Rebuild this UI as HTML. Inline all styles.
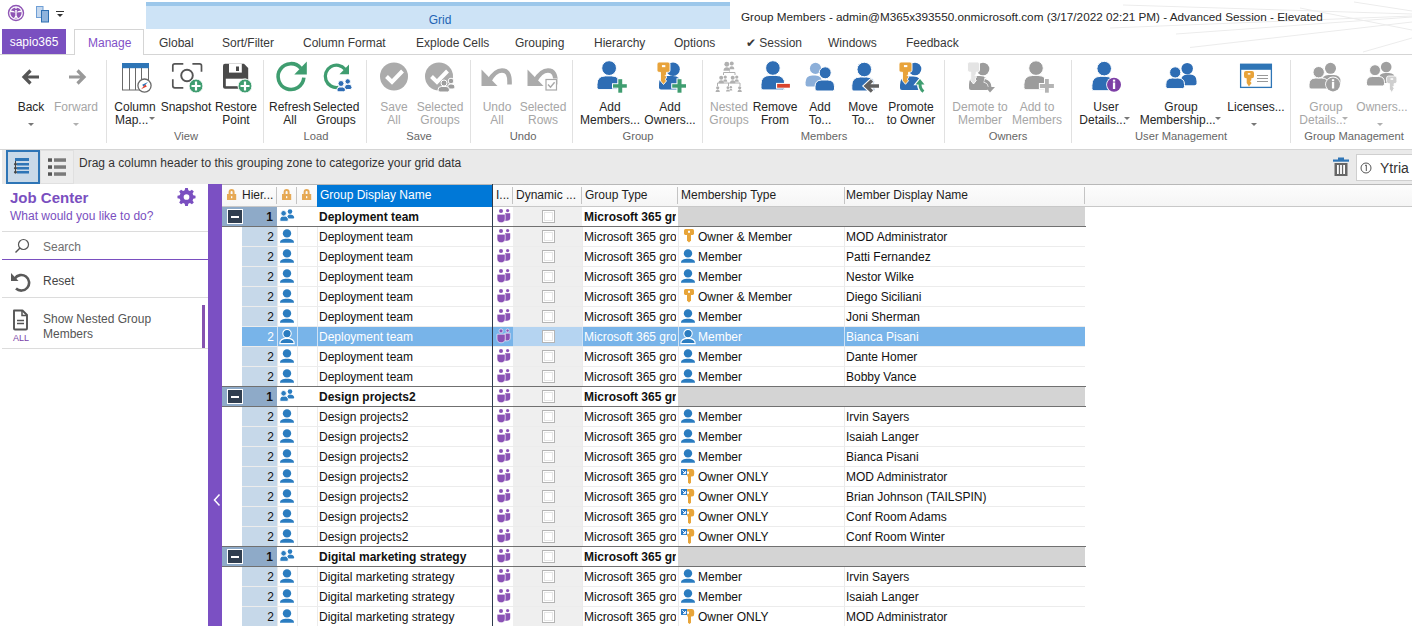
<!DOCTYPE html>
<html><head><meta charset="utf-8"><style>
*{margin:0;padding:0;box-sizing:border-box}
html,body{width:1412px;height:626px;overflow:hidden;background:#fff;font-family:"Liberation Sans", sans-serif;font-size:12px;color:#1e1e1e;position:relative}
.a{position:absolute}
.ic{position:absolute;display:block}
.t{position:absolute;height:20px;line-height:20px;white-space:nowrap;font-size:12px;color:#111}
.t.b{font-weight:bold}
.t.w{color:#fff}
.num{text-align:right}
.clip{overflow:hidden}
.cell{position:absolute}
.rl{position:absolute;left:242px;width:843px;height:1px;background:#ececec}
.gr{position:absolute;left:222px;width:864px;height:1px;background:#707070}
.minus{position:absolute;width:16px;height:15px;background:#303e50;border:1px solid #fff;outline:0}
.minus:after{content:"";position:absolute;left:3px;top:5.5px;width:8px;height:2px;background:#fff}
.cb{position:absolute;width:13px;height:13px;border:1px solid #b4b4b4;background:#fff;box-shadow:inset 0 0 0 1px #fff,inset 0 0 0 2px #e6e6e6}
.tab{position:absolute;top:30px;height:26px;line-height:26px;font-size:12px;color:#383838;white-space:nowrap}
.lbl{position:absolute;text-align:center;font-size:12px;line-height:13px;color:#262626;white-space:nowrap}
.dis{color:#a6a6a6}
.glbl{position:absolute;top:129px;font-size:11.2px;line-height:14px;color:#666;white-space:nowrap;text-align:center}
.sep{position:absolute;top:60px;width:1px;height:83px;background:#e1e1e1}
.dd{position:absolute;width:0;height:0;border-left:3px solid transparent;border-right:3px solid transparent;border-top:3px solid #777}
.hd{position:absolute;top:184px;height:22px;line-height:22px;font-size:12px;color:#1e1e1e;white-space:nowrap}
.hs{position:absolute;top:187px;width:1px;height:17px;background:#c4c4c4}
</style></head><body>
<!-- title bar -->
<svg class="ic" style="left:7px;top:4px" width="18" height="18" viewBox="0 0 18 18"><circle cx="9" cy="9" r="7.5" fill="none" stroke="#8f55b5" stroke-width="1.4"/><circle cx="9" cy="9" r="5.6" fill="#8f55b5"/><path d="M9 5.2 L7.6 3.2 H10.4 Z M8.2 6 H9.8 L9.6 11.5 L11.8 15.5 L9 13.6 L6.2 15.5 L8.4 11.5 Z M3.2 6.2 L7.2 7.2 L8 8.5 L3.2 8 Z M14.8 6.2 L10.8 7.2 L10 8.5 L14.8 8 Z" fill="#fff"/></svg>
<svg class="ic" style="left:35px;top:5px" width="15" height="18" viewBox="0 0 15 18"><rect x="1.5" y="1.5" width="6.5" height="11" fill="#c5d8ee" stroke="#6f9fd6" stroke-width="1"/><rect x="6.5" y="5.5" width="7" height="11.5" fill="#8fb3dc" stroke="#2f6fb2" stroke-width="1"/></svg>
<div class="a" style="left:56px;top:11px;width:8px;height:1.2px;background:#333"></div>
<div class="dd" style="left:57px;top:14px;border-left-width:3.5px;border-right-width:3.5px;border-top:3.5px solid #333"></div>
<div class="a" style="left:146px;top:2px;width:584px;height:27px;background:#cde3f6"></div>
<div class="a" style="left:146px;top:2px;width:584px;height:4px;background:#9cc7ea"></div>
<div class="a" style="left:148px;top:7px;width:584px;height:23px;line-height:26px;text-align:center;color:#1e63b4;font-size:12px">Grid</div>
<svg class="ic" style="left:1100px;top:0" width="312" height="54" viewBox="0 0 312 54"><g stroke="#ececec" stroke-width="1" fill="none"><path d="M23 5 L312 14"/><path d="M10 28 L312 16"/><path d="M76 34 L312 17"/><path d="M90 47.5 L312 22"/><path d="M254 2 L312 11"/><path d="M263 52 L312 38"/><path d="M200 8 L312 30"/></g></svg>
<div class="a" style="left:741px;top:10px;line-height:14px;font-size:11.72px;color:#262626;white-space:nowrap">Group Members - admin@M365x393550.onmicrosoft.com (3/17/2022 02:21 PM) - Advanced Session - Elevated</div>
<!-- tabs -->
<div class="a" style="left:0;top:54px;width:1412px;height:1px;background:#d5d5d5"></div>
<div class="a" style="left:2px;top:29px;width:64px;height:25px;background:#7a50c0;color:#fff;line-height:26px;text-align:center;font-size:12px">sapio365</div>
<div class="a" style="left:74px;top:29px;width:70px;height:26px;background:#fff;border:1px solid #d5d5d5;border-bottom:none"></div>
<div class="tab" style="left:88px;color:#8250c8">Manage</div>
<div class="tab" style="left:159px">Global</div>
<div class="tab" style="left:222px">Sort/Filter</div>
<div class="tab" style="left:303px">Column Format</div>
<div class="tab" style="left:416px">Explode Cells</div>
<div class="tab" style="left:515px">Grouping</div>
<div class="tab" style="left:594px">Hierarchy</div>
<div class="tab" style="left:674px">Options</div>
<div class="tab" style="left:746px">&#10004; Session</div>
<div class="tab" style="left:828px">Windows</div>
<div class="tab" style="left:906px">Feedback</div>
<!-- ribbon -->
<div class="a" style="left:0;top:149px;width:1412px;height:1px;background:#d5d5d5"></div>
<svg class="ic" style="left:0;top:0" width="1412" height="150" viewBox="0 0 1412 150"><path d="M39 77 H24.5 M30.5 70.5 L24 77 L30.5 83.5" fill="none" stroke="#555" stroke-width="3.2" stroke-linejoin="miter"/><path d="M69 77 H83.5 M77.5 70.5 L84 77 L77.5 83.5" fill="none" stroke="#999" stroke-width="3.2"/><rect x="122.5" y="63.5" width="26" height="26.5" fill="#fff" stroke="#6a6a6a"/><rect x="122" y="63" width="27" height="5.2" fill="#2e75b6"/><path d="M129.5 68 V90 M135.5 68 V90 M141.5 68 V82" stroke="#6a6a6a" stroke-width="1"/><circle cx="144.5" cy="85.6" r="6.6" fill="#fff" stroke="#6a6a6a" stroke-width="1.3"/><path d="M148 82 L143.6 86.8 L142.2 84.8 Z" fill="#2e75b6"/><path d="M141 89.2 L145.4 84.4 L146.8 86.4 Z" fill="#e04030"/><path d="M172.8 71.8 V65.8 Q172.8 63.8 174.8 63.8 H183.3 M192.4 63.8 H199.5 Q201.5 63.8 201.5 65.8 V71.8 M172.8 79.3 V85.8 Q172.8 87.8 174.8 87.8 H183.3" fill="none" stroke="#555" stroke-width="1.7"/><circle cx="187" cy="75.5" r="5.8" fill="none" stroke="#555" stroke-width="1.9"/><circle cx="196" cy="86" r="7" fill="#3f9d70" stroke="#fff" stroke-width="1"/><path d="M196 81.5 V90.5 M191.5 86 H200.5" stroke="#fff" stroke-width="2.2"/><path d="M223 65.8 Q223 63.8 225 63.8 H244 L248.2 68 V86.8 Q248.2 88.8 246.2 88.8 H225 Q223 88.8 223 86.8 Z" fill="#4a4a4a"/><rect x="229" y="63.8" width="12.8" height="8.8" fill="#fff"/><rect x="236" y="66.5" width="3" height="4.5" fill="#4a4a4a"/><rect x="225.8" y="78.7" width="20.4" height="7.5" fill="#fff"/><circle cx="245" cy="86" r="7" fill="#3f9d70" stroke="#fff" stroke-width="1"/><path d="M245 81.5 V90.5 M240.5 86 H249.5" stroke="#fff" stroke-width="2.2"/><path d="M303.85 77.7 A12.9 12.9 0 1 1 300.9 68.3" fill="none" stroke="#3f9d70" stroke-width="3.6"/><path d="M294.3 74.6 H306.8 V61.5 Z" fill="#3f9d70"/><path d="M338.4 87.4 A11.2 11.2 0 1 1 345.1 69.2" fill="none" stroke="#3f9d70" stroke-width="3.3"/><path d="M339.5 74.2 H349 V64.5 Z" fill="#3f9d70"/><path d="M344.5 87.5 V87.45 Q344.5 84.2 347.75 84.2 H348.75 Q352 84.2 352 87.45 V87.5 Q352 89.5 350 89.5 H346.5 Q344.5 89.5 344.5 87.5 Z" fill="#2e6db4" stroke="#fff" stroke-width="1"/><circle cx="347.7" cy="81.4" r="2.7" fill="#2e6db4" stroke="#fff" stroke-width="1"/><path d="M336.8 89.8 V89.976 Q336.8 87 339.776 87 H342.524 Q345.5 87 345.5 89.976 V89.8 Q345.5 91.8 343.5 91.8 H338.8 Q336.8 91.8 336.8 89.8 Z" fill="#2e6db4" stroke="#fff" stroke-width="1"/><circle cx="341" cy="83.5" r="3" fill="#2e6db4" stroke="#fff" stroke-width="1"/><circle cx="394" cy="76.5" r="14" fill="#ababab"/><path d="M386.5 76.5 L392 82 L402.5 71" fill="none" stroke="#fff" stroke-width="4"/><circle cx="439" cy="76.5" r="14" fill="#ababab"/><path d="M431.5 76.5 L437 82 L447.5 71" fill="none" stroke="#fff" stroke-width="4"/><path d="M447.5 87 V87.1 Q447.5 84 450.6 84 H451.9 Q455 84 455 87.1 V87 Q455 89 453 89 H449.5 Q447.5 89 447.5 87 Z" fill="#9d9d9d" stroke="#fff" stroke-width="1"/><circle cx="451" cy="81" r="2.8" fill="#9d9d9d" stroke="#fff" stroke-width="1"/><path d="M438 90 V89.91 Q438 86.5 441.41 86.5 H446.09 Q449.5 86.5 449.5 89.91 V90 Q449.5 92 447.5 92 H440 Q438 92 438 90 Z" fill="#9d9d9d" stroke="#fff" stroke-width="1"/><circle cx="444" cy="83" r="3" fill="#9d9d9d" stroke="#fff" stroke-width="1"/><g transform="translate(480,65)"><path d="M1.5 4.5 V21 H17.5 Z" fill="#ababab"/><path d="M9 16 C13 9 16.5 5.5 22 5.5 C27.5 5.5 30 9.5 29.5 19.5" fill="none" stroke="#ababab" stroke-width="4.6"/></g><g transform="translate(526,65)"><path d="M1.5 4.5 V21 H17.5 Z" fill="#ababab"/><path d="M9 16 C13 9 16.5 5.5 22 5.5 C27.5 5.5 30 9.5 29.5 19.5" fill="none" stroke="#ababab" stroke-width="4.6"/></g><rect x="545" y="78.5" width="12.5" height="12.5" fill="#fff"/><rect x="546" y="79.5" width="10.5" height="10.5" fill="#fff" stroke="#a8a8a8" stroke-width="1.2"/><path d="M548 84.5 L550.5 87.2 L554.6 82.3" fill="none" stroke="#a8a8a8" stroke-width="1.4"/><path d="M597 87.6 V84.394 Q597 75.9 605.494 75.9 H611.506 Q620 75.9 620 84.394 V87.6 Q620 89.6 618 89.6 H599 Q597 89.6 597 87.6 Z" fill="#2e6db4" stroke="#fff" stroke-width="1"/><circle cx="609.1" cy="68.1" r="7.4" fill="#2e6db4" stroke="#fff" stroke-width="1"/><path d="M617.3 78.2 H623.2 V83.2 H627.8 V88.7 H623.2 V93.7 H617.3 V88.7 H612 V83.2 H617.3 Z" fill="#fff"/><rect x="613" y="84.2" width="13.799999999999955" height="3.5" fill="#3f9d70"/><rect x="618.3" y="79.2" width="3.900000000000091" height="13.5" fill="#3f9d70"/><path d="M659 87.6 V84.432 Q659 76 667.432 76 H672.568 Q681 76 681 84.432 V87.6 Q681 89.6 679 89.6 H661 Q659 89.6 659 87.6 Z" fill="#2e6db4"/><circle cx="673" cy="69.2" r="6.8" fill="#2e6db4"/><path d="M657 64 Q657 62 659 62 H668 Q670 62 670 64 V70.35 Q670 72.35 668 72.35 H666.49 V74.35 L665.29 75.55 L666.49 76.75 V77.94999999999999 L665.29 79.14999999999999 L666.49 81.0 L663.5 84.5 L660.51 81.0 V72.35 H659 Q657 72.35 657 70.35 Z" fill="#e8a33a" stroke="#fff" stroke-width="0.9"/><rect x="661.94" y="65.105" width="3.38" height="2.07" fill="#fff"/><path d="M676.5 78.2 H682.5 V83.2 H687 V88.7 H682.5 V93.7 H676.5 V88.7 H671.2 V83.2 H676.5 Z" fill="#fff"/><rect x="672.2" y="84.2" width="13.799999999999955" height="3.5" fill="#3f9d70"/><rect x="677.5" y="79.2" width="4.0" height="13.5" fill="#3f9d70"/><g transform="translate(723.5,61.5) scale(1.1)"><circle cx="3" cy="2.5" r="2.2" fill="#b0b0b0"/><path d="M0 8.5 Q0 5.3 3 5.3 Q6 5.3 6 8.5 Z" fill="#b0b0b0"/><circle cx="7.5" cy="1.8" r="1.8" fill="#b0b0b0"/><path d="M5.2 7 Q5.2 4.3 7.5 4.3 Q9.8 4.3 9.8 7 Z" fill="#b0b0b0"/></g><path d="M729.5 71.5 V72.5 M723.5 72.5 H735 M723.5 72.5 V75 M735 72.5 V75" stroke="#b0b0b0" stroke-width="1" fill="none"/><g transform="translate(718.5,75.5) scale(0.9)"><circle cx="3" cy="2.5" r="2.2" fill="#b0b0b0"/><path d="M0 8.5 Q0 5.3 3 5.3 Q6 5.3 6 8.5 Z" fill="#b0b0b0"/><circle cx="7.5" cy="1.8" r="1.8" fill="#b0b0b0"/><path d="M5.2 7 Q5.2 4.3 7.5 4.3 Q9.8 4.3 9.8 7 Z" fill="#b0b0b0"/></g><g transform="translate(730,75.5) scale(0.9)"><circle cx="3" cy="2.5" r="2.2" fill="#b0b0b0"/><path d="M0 8.5 Q0 5.3 3 5.3 Q6 5.3 6 8.5 Z" fill="#b0b0b0"/><circle cx="7.5" cy="1.8" r="1.8" fill="#b0b0b0"/><path d="M5.2 7 Q5.2 4.3 7.5 4.3 Q9.8 4.3 9.8 7 Z" fill="#b0b0b0"/></g><path d="M717.5 83 H740 M717.5 83 V86 M728.5 83 V86 M740 83 V86" stroke="#b0b0b0" stroke-width="1" fill="none"/><circle cx="717.7" cy="87.8" r="1.6" fill="#b0b0b0"/><path d="M715.5 92 Q715.5 89.5 717.7 89.5 Q719.9 89.5 719.9 92 Z" fill="#b0b0b0"/><g transform="translate(726,86) scale(0.65)"><circle cx="3" cy="2.5" r="2.2" fill="#b0b0b0"/><path d="M0 8.5 Q0 5.3 3 5.3 Q6 5.3 6 8.5 Z" fill="#b0b0b0"/><circle cx="7.5" cy="1.8" r="1.8" fill="#b0b0b0"/><path d="M5.2 7 Q5.2 4.3 7.5 4.3 Q9.8 4.3 9.8 7 Z" fill="#b0b0b0"/></g><circle cx="739.7" cy="87.8" r="1.6" fill="#b0b0b0"/><path d="M737.5 92 Q737.5 89.5 739.7 89.5 Q741.9 89.5 741.9 92 Z" fill="#b0b0b0"/><path d="M761 87.9 V84.39 Q761 75.4 769.99 75.4 H775.81 Q784.8 75.4 784.8 84.39 V87.9 Q784.8 89.9 782.8 89.9 H763 Q761 89.9 761 87.9 Z" fill="#2e6db4" stroke="#fff" stroke-width="1"/><circle cx="772.9" cy="68" r="7.3" fill="#2e6db4" stroke="#fff" stroke-width="1"/><rect x="776" y="82.9" width="15" height="5.8" fill="#fff"/><rect x="777.1" y="83.9" width="12.8" height="3.8" fill="#d9442e"/><path d="M805.6 84.5 V82.32 Q805.6 75.5 812.4200000000001 75.5 H815.18 Q822 75.5 822 82.32 V84.5 Q822 86.5 820 86.5 H807.6 Q805.6 86.5 805.6 84.5 Z" fill="#8cafd9"/><circle cx="815.5" cy="68.4" r="5.6" fill="#8cafd9"/><path d="M815 89 V86.82 Q815 80 821.82 80 H827.68 Q834.5 80 834.5 86.82 V89 Q834.5 91 832.5 91 H817 Q815 91 815 89 Z" fill="#2e6db4" stroke="#fff" stroke-width="1"/><circle cx="825.2" cy="72.8" r="6" fill="#2e6db4" stroke="#fff" stroke-width="1"/><path d="M851.8 89 V85.68 Q851.8 77 860.4799999999999 77 H866.32 Q875 77 875 85.68 V89 Q875 91 873 91 H853.8 Q851.8 91 851.8 89 Z" fill="#2e6db4" stroke="#fff" stroke-width="1"/><circle cx="864.3" cy="69.5" r="7.3" fill="#2e6db4" stroke="#fff" stroke-width="1"/><path d="M879.5 86 H867 M872.5 80 L866 86 L872.5 92" fill="none" stroke="#fff" stroke-width="5.5"/><path d="M879 86 H867 M872 80.5 L866 86 L872 91.5" fill="none" stroke="#606060" stroke-width="3.4"/><path d="M900 88 V84.87 Q900 76.5 908.37 76.5 H913.13 Q921.5 76.5 921.5 84.87 V88 Q921.5 90 919.5 90 H902 Q900 90 900 88 Z" fill="#2e6db4"/><circle cx="915" cy="69" r="6.3" fill="#2e6db4"/><path d="M899 64 Q899 62 901 62 H910 Q912 62 912 64 V70.258 Q912 72.258 910 72.258 H908.49 V74.258 L907.29 75.458 L908.49 76.658 V77.85799999999999 L907.29 79.05799999999999 L908.49 80.8 L905.5 84.3 L902.51 80.8 V72.258 H901 Q899 72.258 899 70.258 Z" fill="#e8a33a" stroke="#fff" stroke-width="0.9"/><rect x="903.94" y="65.0774" width="3.38" height="2.0516" fill="#fff"/><path d="M923.5 91.5 C919.5 89.5 919.5 86 919.5 84 V83" fill="none" stroke="#fff" stroke-width="5"/><path d="M915 84.5 L920 78.5 L925 84.5 Z" fill="#fff" stroke="#fff" stroke-width="1.5"/><path d="M923.5 91.5 C920.5 89.5 920 86.5 920 84 V83" fill="none" stroke="#3f9d70" stroke-width="3"/><path d="M915.5 84.5 L920 79 L924.5 84.5 Z" fill="#3f9d70"/><path d="M969 88 V84.68 Q969 76 977.68 76 H979.82 Q988.5 76 988.5 84.68 V88 Q988.5 90 986.5 90 H971 Q969 90 969 88 Z" fill="#9c9c9c"/><circle cx="983" cy="69" r="6.3" fill="#9c9c9c"/><path d="M967.5 64 Q967.5 62 969.5 62 H977.5 Q979.5 62 979.5 64 V70.12 Q979.5 72.12 977.5 72.12 H976.26 V74.12 L975.06 75.32000000000001 L976.26 76.52000000000001 V77.72 L975.06 78.92 L976.26 80.5 L973.5 84 L970.74 80.5 V72.12 H969.5 Q967.5 72.12 967.5 70.12 Z" fill="#e4e4e4" stroke="#fff" stroke-width="0.9"/><path d="M984 80 C989 81 990.5 84 990.5 88 V89" fill="none" stroke="#fff" stroke-width="5"/><path d="M984.5 80.5 C988.5 81.5 990 84 990 87.5 V88" fill="none" stroke="#9c9c9c" stroke-width="3"/><path d="M985.5 87 L990 92.5 L995 87 Z" fill="#9c9c9c"/><path d="M1023.9 87.7 V84.304 Q1023.9 75.5 1032.704 75.5 H1038.196 Q1047 75.5 1047 84.304 V87.7 Q1047 89.7 1045 89.7 H1025.9 Q1023.9 89.7 1023.9 87.7 Z" fill="#9c9c9c" stroke="#fff" stroke-width="1"/><circle cx="1036" cy="68.1" r="7.3" fill="#9c9c9c" stroke="#fff" stroke-width="1"/><path d="M1044 78 H1049.8 V83 H1054.9 V89 H1049.8 V93.7 H1044 V89 H1038.9 V83 H1044 Z" fill="#fff"/><rect x="1039.9" y="84" width="14.0" height="4" fill="#b4b4b4"/><rect x="1045" y="79" width="3.7999999999999545" height="13.700000000000003" fill="#b4b4b4"/><path d="M1091.9 88.7 V85.228 Q1091.9 76.3 1100.8280000000002 76.3 H1105.072 Q1114 76.3 1114 85.228 V88.7 Q1114 90.7 1112 90.7 H1093.9 Q1091.9 90.7 1091.9 88.7 Z" fill="#2e6db4" stroke="#fff" stroke-width="1"/><circle cx="1104.2" cy="68.6" r="7.3" fill="#2e6db4" stroke="#fff" stroke-width="1"/><circle cx="1114" cy="84.8" r="7.8" fill="#fff"/><circle cx="1114" cy="84.8" r="7" fill="#7d3fa6"/><rect x="1112.9" y="82.5" width="2.3" height="6.5" fill="#fff"/><rect x="1112.9" y="79.6" width="2.3" height="2" fill="#fff"/><path d="M1181 83.2 V81.172 Q1181 74.6 1187.5720000000001 74.6 H1189.9279999999999 Q1196.5 74.6 1196.5 81.172 V83.2 Q1196.5 85.2 1194.5 85.2 H1183 Q1181 85.2 1181 83.2 Z" fill="#2e6db4"/><circle cx="1187.2" cy="68.6" r="5.7" fill="#2e6db4"/><path d="M1165.8 86.6 V84.572 Q1165.8 78 1172.3719999999998 78 H1177.928 Q1184.5 78 1184.5 84.572 V86.6 Q1184.5 88.6 1182.5 88.6 H1167.8 Q1165.8 88.6 1165.8 86.6 Z" fill="#2e6db4" stroke="#fff" stroke-width="1"/><circle cx="1175.2" cy="72.4" r="5.6" fill="#2e6db4" stroke="#fff" stroke-width="1"/><rect x="1240.6" y="64.4" width="30.8" height="23" fill="#fff" stroke="#2e75b6" stroke-width="1.3"/><rect x="1240" y="63.8" width="32" height="6" fill="#2e75b6"/><path d="M1244 73 Q1244 71 1246 71 H1252 Q1254 71 1254 73 V76.13 Q1254 78.13 1252 78.13 H1251.3 V80.13 L1250.1 81.33 L1251.3 82.53 V83.72999999999999 L1250.1 84.92999999999999 L1251.3 83.0 L1249.0 86.5 L1246.7 83.0 V78.13 H1246 Q1244 78.13 1244 76.13 Z" fill="#e8a33a"/><rect x="1247.8" y="73.139" width="2.6" height="1.4260000000000002" fill="#fff"/><path d="M1257 75.5 H1268 M1257 78.5 H1268 M1257 81.5 H1268" stroke="#999" stroke-width="1"/><path d="M1322 83.5 V81.51 Q1322 75 1328.51 75 H1333.99 Q1340.5 75 1340.5 81.51 V83.5 Q1340.5 85.5 1338.5 85.5 H1324 Q1322 85.5 1322 83.5 Z" fill="#a0a0a0"/><circle cx="1330.5" cy="68.3" r="5.5" fill="#a0a0a0"/><path d="M1309 87 V84.82 Q1309 78 1315.82 78 H1321.68 Q1328.5 78 1328.5 84.82 V87 Q1328.5 89 1326.5 89 H1311 Q1309 89 1309 87 Z" fill="#a0a0a0" stroke="#fff" stroke-width="1"/><circle cx="1318.7" cy="72.2" r="5.7" fill="#a0a0a0" stroke="#fff" stroke-width="1"/><circle cx="1333" cy="84.4" r="7.8" fill="#fff"/><circle cx="1333" cy="84.4" r="7" fill="#a0a0a0"/><rect x="1331.9" y="82" width="2.3" height="6.5" fill="#fff"/><rect x="1331.9" y="79.2" width="2.3" height="2" fill="#fff"/><path d="M1379 81 V79.2 Q1379 73 1385.2 73 H1388.8 Q1395 73 1395 79.2 V81 Q1395 83 1393 83 H1381 Q1379 83 1379 81 Z" fill="#a0a0a0"/><circle cx="1386.2" cy="67" r="5.3" fill="#a0a0a0"/><path d="M1366.5 84 V82.39 Q1366.5 76.5 1372.39 76.5 H1378.61 Q1384.5 76.5 1384.5 82.39 V84 Q1384.5 86 1382.5 86 H1368.5 Q1366.5 86 1366.5 84 Z" fill="#a0a0a0" stroke="#fff" stroke-width="1"/><circle cx="1375" cy="70.2" r="5.5" fill="#a0a0a0" stroke="#fff" stroke-width="1"/><path d="M1386.6 78 Q1386.6 76 1388.6 76 H1394.8999999999999 Q1396.8999999999999 76 1396.8999999999999 78 V81.59 Q1396.8999999999999 83.59 1394.8999999999999 83.59 H1394.119 V85.59 L1392.9189999999999 86.79 L1394.119 87.99000000000001 V89.19 L1392.9189999999999 90.39 L1394.119 89.0 L1391.75 92.5 L1389.3809999999999 89.0 V83.59 H1388.6 Q1386.6 83.59 1386.6 81.59 Z" fill="#cfcfcf" stroke="#fff" stroke-width="0.9"/><rect x="1390.514" y="78.277" width="2.6780000000000004" height="1.5180000000000002" fill="#fff"/></svg>
<div class="lbl" style="left:-29px;top:101px;width:120px">Back</div>
<div class="dd" style="left:28px;top:123px;border-top-color:#777"></div>
<div class="lbl dis" style="left:16px;top:101px;width:120px">Forward</div>
<div class="dd" style="left:73px;top:123px;border-top-color:#b0b0b0"></div>
<div class="sep" style="left:106px"></div>
<div class="lbl" style="left:75px;top:101px;width:120px">Column<br>Map...&nbsp;&nbsp;</div>
<div class="dd" style="left:149px;top:117px;border-top-color:#777"></div>
<div class="lbl" style="left:126px;top:101px;width:120px">Snapshot</div>
<div class="lbl" style="left:176px;top:101px;width:120px">Restore<br>Point</div>
<div class="glbl" style="left:106px;width:160px">View</div>
<div class="sep" style="left:263px"></div>
<div class="lbl" style="left:230px;top:101px;width:120px">Refresh<br>All</div>
<div class="lbl" style="left:276px;top:101px;width:120px">Selected<br>Groups</div>
<div class="glbl" style="left:236px;width:160px">Load</div>
<div class="sep" style="left:366px"></div>
<div class="lbl dis" style="left:334px;top:101px;width:120px">Save<br>All</div>
<div class="lbl dis" style="left:380px;top:101px;width:120px">Selected<br>Groups</div>
<div class="glbl" style="left:339px;width:160px">Save</div>
<div class="sep" style="left:470px"></div>
<div class="lbl dis" style="left:437px;top:101px;width:120px">Undo<br>All</div>
<div class="lbl dis" style="left:483px;top:101px;width:120px">Selected<br>Rows</div>
<div class="glbl" style="left:443px;width:160px">Undo</div>
<div class="sep" style="left:572px"></div>
<div class="lbl" style="left:550px;top:101px;width:120px">Add<br>Members...</div>
<div class="lbl" style="left:610px;top:101px;width:120px">Add<br>Owners...</div>
<div class="glbl" style="left:558px;width:160px">Group</div>
<div class="sep" style="left:702px"></div>
<div class="lbl dis" style="left:669px;top:101px;width:120px">Nested<br>Groups</div>
<div class="lbl" style="left:715px;top:101px;width:120px">Remove<br>From</div>
<div class="lbl" style="left:760px;top:101px;width:120px">Add<br>To...</div>
<div class="lbl" style="left:803px;top:101px;width:120px">Move<br>To...</div>
<div class="lbl" style="left:851px;top:101px;width:120px">Promote<br>to Owner</div>
<div class="glbl" style="left:744px;width:160px">Members</div>
<div class="sep" style="left:944px"></div>
<div class="lbl dis" style="left:920px;top:101px;width:120px">Demote to<br>Member</div>
<div class="lbl dis" style="left:977px;top:101px;width:120px">Add to<br>Members</div>
<div class="glbl" style="left:928px;width:160px">Owners</div>
<div class="sep" style="left:1071px"></div>
<div class="lbl" style="left:1046px;top:101px;width:120px">User<br>Details...&nbsp;&nbsp;</div>
<div class="dd" style="left:1124px;top:117px;border-top-color:#777"></div>
<div class="lbl" style="left:1121px;top:101px;width:120px">Group<br>Membership...&nbsp;&nbsp;</div>
<div class="dd" style="left:1215px;top:117px;border-top-color:#777"></div>
<div class="lbl" style="left:1196px;top:101px;width:120px">Licenses...</div>
<div class="dd" style="left:1251px;top:123px;border-top-color:#777"></div>
<div class="glbl" style="left:1101px;width:160px">User Management</div>
<div class="sep" style="left:1290px"></div>
<div class="lbl dis" style="left:1266px;top:101px;width:120px">Group<br>Details...&nbsp;&nbsp;</div>
<div class="dd" style="left:1342px;top:117px;border-top-color:#b0b0b0"></div>
<div class="lbl dis" style="left:1322px;top:101px;width:120px">Owners...</div>
<div class="dd" style="left:1377px;top:123px;border-top-color:#b0b0b0"></div>
<div class="glbl" style="left:1274px;width:160px">Group Management</div>
<!-- grouping zone -->
<div class="a" style="left:2px;top:150px;width:1410px;height:34px;background:#eaeaea"></div>
<div class="a" style="left:6px;top:150px;width:34px;height:34px;background:#c9d9e8;border:2px solid #2e75b6"></div>
<svg class="ic" style="left:13px;top:157px" width="18" height="18" viewBox="0 0 18 18"><rect x="2" y="1" width="14" height="3" fill="#2e75b6"/><rect x="4" y="6" width="12" height="2.5" fill="#2e75b6"/><rect x="4" y="10" width="12" height="2.5" fill="#2e75b6"/><rect x="4" y="14" width="12" height="2.5" fill="#2e75b6"/><path d="M2.5 4 V16" stroke="#444" stroke-width="1"/><circle cx="2.5" cy="7.2" r="1.1" fill="none" stroke="#444"/><circle cx="2.5" cy="11.2" r="1.1" fill="none" stroke="#444"/><circle cx="2.5" cy="15.2" r="1.1" fill="none" stroke="#444"/></svg>
<div class="a" style="left:40px;top:150px;width:34px;height:34px;background:#ededed;border:1px solid #e0e0e0"></div>
<svg class="ic" style="left:47px;top:157px" width="20" height="20" viewBox="0 0 20 20"><rect x="1" y="1.3" width="4" height="3.5" fill="#555"/><rect x="7" y="1.3" width="12" height="3.5" fill="#7a7a7a"/><rect x="1" y="8.3" width="4" height="3.5" fill="#555"/><rect x="7" y="8.3" width="12" height="3.5" fill="#7a7a7a"/><rect x="1" y="15.3" width="4" height="3.5" fill="#555"/><rect x="7" y="15.3" width="12" height="3.5" fill="#7a7a7a"/></svg>
<div class="a" style="left:79px;top:156px;line-height:15px;color:#333;white-space:nowrap">Drag a column header to this grouping zone to categorize your grid data</div>
<svg class="ic" style="left:1332px;top:157px" width="18" height="20" viewBox="0 0 18 20"><rect x="1" y="2.5" width="16" height="2.2" fill="#2e75b6"/><rect x="6" y="0.5" width="6" height="2.5" fill="#2e75b6"/><path d="M2.5 6 H15.5 V19 H2.5 Z" fill="#666"/><rect x="5" y="8" width="1.8" height="9" fill="#fff"/><rect x="8.1" y="8" width="1.8" height="9" fill="#fff"/><rect x="11.2" y="8" width="1.8" height="9" fill="#fff"/></svg>
<div class="a" style="left:1356px;top:154px;width:60px;height:27px;background:#fff;border:1px solid #cfcfcf"></div>
<svg class="ic" style="left:1360px;top:162px" width="12" height="12" viewBox="0 0 12 12"><circle cx="6" cy="6" r="5" fill="none" stroke="#555" stroke-width="1"/><path d="M5 3.5 L6.3 3 V9" stroke="#555" stroke-width="1" fill="none"/></svg>
<div class="a" style="left:1380px;top:159px;line-height:18px;font-size:14px;color:#333">Ytria</div>
<!-- left panel -->
<div class="a" style="left:10px;top:189px;font-size:15px;line-height:17px;font-weight:bold;color:#7a4fc0;white-space:nowrap">Job Center</div>
<div class="a" style="left:10px;top:209px;font-size:12px;line-height:15px;color:#7a4fc0;white-space:nowrap">What would you like to do?</div>
<svg class="ic" style="left:177px;top:187px" width="19" height="19" viewBox="0 0 20 20"><path fill="#7a4fc0" d="M8.6 1 H11.4 L11.9 3.4 L13.6 4.1 L15.7 2.8 L17.7 4.8 L16.4 6.9 L17.1 8.6 L19.5 9.1 V11.9 L17.1 12.4 L16.4 14.1 L17.7 16.2 L15.7 18.2 L13.6 16.9 L11.9 17.6 L11.4 20 H8.6 L8.1 17.6 L6.4 16.9 L4.3 18.2 L2.3 16.2 L3.6 14.1 L2.9 12.4 L0.5 11.9 V9.1 L2.9 8.6 L3.6 6.9 L2.3 4.8 L4.3 2.8 L6.4 4.1 L8.1 3.4 Z"/><circle cx="10" cy="10.5" r="3" fill="#fff"/></svg>
<div class="a" style="left:2px;top:231px;width:206px;height:1px;background:#dcdcdc"></div>
<svg class="ic" style="left:14px;top:238px" width="16" height="16" viewBox="0 0 16 16"><circle cx="9.5" cy="6.5" r="5" fill="none" stroke="#555" stroke-width="1.2"/><path d="M6 10 L1.5 14.5" stroke="#555" stroke-width="1.4"/></svg>
<div class="a" style="left:43px;top:240px;line-height:15px;color:#707070">Search</div>
<div class="a" style="left:2px;top:259px;width:206px;height:1px;background:#7a4fc0"></div>
<svg class="ic" style="left:10px;top:271px" width="21" height="21" viewBox="0 0 21 21"><path d="M4.8 7.5 A7.8 7.8 0 1 1 6 17.5" fill="none" stroke="#5a5a5a" stroke-width="2.6"/><path d="M1 2 V10 H8.5 Z" fill="#5a5a5a"/></svg>
<div class="a" style="left:43px;top:274px;line-height:15px;color:#444">Reset</div>
<div class="a" style="left:2px;top:297px;width:206px;height:1px;background:#dcdcdc"></div>
<svg class="ic" style="left:12px;top:309px" width="17" height="22" viewBox="0 0 17 22"><path d="M2 1.5 H10.5 L15 6 V19.5 Q15 20.5 14 20.5 H3 Q2 20.5 2 19.5 Z" fill="none" stroke="#555" stroke-width="1.9" stroke-linejoin="round"/><path d="M10 1.5 V6.5 H15" fill="none" stroke="#555" stroke-width="1.5"/><path d="M5 11.5 H12 M5 14.5 H12" stroke="#555" stroke-width="1.6"/></svg>
<div class="a" style="left:13px;top:333px;font-size:9px;line-height:10px;color:#7a3fa8">ALL</div>
<div class="a" style="left:43px;top:312px;line-height:15px;color:#555;white-space:nowrap">Show Nested Group<br>Members</div>
<div class="a" style="left:202px;top:305px;width:2.5px;height:43px;background:#8552b0"></div>
<div class="a" style="left:2px;top:348px;width:206px;height:1px;background:#dcdcdc"></div>
<!-- purple strip -->
<div class="a" style="left:208px;top:184px;width:14px;height:442px;background:#7b50c3"></div>
<svg class="ic" style="left:213px;top:493px" width="8" height="14" viewBox="0 0 8 14"><path d="M6.5 1.5 L1.5 7 L6.5 12.5" fill="none" stroke="#fff" stroke-width="1.5"/></svg>
<!-- grid header -->
<div class="a" style="left:222px;top:184px;width:1190px;height:23px;background:linear-gradient(#fdfdfd,#f5f5f5);border-bottom:1px solid #c8c8c8"></div>
<div class="a" style="left:222px;top:184px;width:1190px;height:1px;background:#b8b8b8"></div>
<div class="a" style="left:317px;top:185px;width:176px;height:22px;background:#0078d7"></div>
<svg class="ic" style="left:227px;top:189px" width="10" height="11" viewBox="0 0 10 11"><path d="M1.6 5.5 V3 Q1.6 0 4.6 0 Q7.6 0 7.6 3 V5.5 H5.6 V3 Q5.6 2 4.6 2 Q3.6 2 3.6 3 V5.5 Z" fill="#e6a955"/><rect x="0" y="5" width="9.2" height="6" fill="#e6a955"/><rect x="4" y="7.2" width="1.3" height="2" fill="#fff"/></svg>
<div class="hd" style="left:242px">Hier...</div>
<div class="hs" style="left:276px"></div>
<svg class="ic" style="left:282px;top:189px" width="10" height="11" viewBox="0 0 10 11"><path d="M1.6 5.5 V3 Q1.6 0 4.6 0 Q7.6 0 7.6 3 V5.5 H5.6 V3 Q5.6 2 4.6 2 Q3.6 2 3.6 3 V5.5 Z" fill="#e6a955"/><rect x="0" y="5" width="9.2" height="6" fill="#e6a955"/><rect x="4" y="7.2" width="1.3" height="2" fill="#fff"/></svg>
<div class="hs" style="left:296px"></div>
<svg class="ic" style="left:302px;top:189px" width="10" height="11" viewBox="0 0 10 11"><path d="M1.6 5.5 V3 Q1.6 0 4.6 0 Q7.6 0 7.6 3 V5.5 H5.6 V3 Q5.6 2 4.6 2 Q3.6 2 3.6 3 V5.5 Z" fill="#e6a955"/><rect x="0" y="5" width="9.2" height="6" fill="#e6a955"/><rect x="4" y="7.2" width="1.3" height="2" fill="#fff"/></svg>
<div class="hd" style="left:320px;color:#fff">Group Display Name</div>
<div class="hd" style="left:496px">I...</div>
<div class="hs" style="left:512px"></div>
<div class="hd" style="left:516px">Dynamic ...</div>
<div class="hs" style="left:581px"></div>
<div class="hd" style="left:585px">Group Type</div>
<div class="hs" style="left:677px"></div>
<div class="hd" style="left:681px">Membership Type</div>
<div class="hs" style="left:844px"></div>
<div class="hd" style="left:846px">Member Display Name</div>
<div class="hs" style="left:1084px"></div>
<!-- grid body -->
<div class="cell" style="left:222px;top:207px;width:55px;height:20px;background:#8eaac8"></div>
<div class="minus" style="left:227px;top:209px"></div>
<div class="t num b" style="left:240px;top:207px;width:33px">1</div>
<svg class="ic" style="left:279px;top:209px" width="16" height="14" viewBox="0 -1 16 14"><circle cx="11" cy="1.6" r="2.3" fill="#2a7cc0"/><path d="M8 8.6 C8 5.8 9.3 4.4 11 4.4 C13 4.4 15.2 5.6 15.2 7.6 Q15.2 8.6 14.2 8.6 Z" fill="#2a7cc0"/><path d="M0.8 10.2 C0.8 7.2 2.4 5.9 4.8 5.9 C7.4 5.9 9.4 7.2 9.4 10 Q9.4 11.3 8 11.3 H2 Q0.8 11.3 0.8 10.2 Z" fill="#2a7cc0" stroke="#fff" stroke-width="0.9"/><circle cx="4.6" cy="3.3" r="2.8" fill="#2a7cc0" stroke="#fff" stroke-width="0.9"/></svg>
<div class="t b" style="left:319px;top:207px">Deployment team</div>
<div class="cell" style="left:513px;top:207px;width:69px;height:20px;background:#efefef"></div>
<svg class="ic" style="left:496px;top:207px" width="16" height="17" viewBox="0 0 16 17"><circle cx="11.6" cy="3.6" r="1.6" fill="#8a52b5"/><path d="M9 6.2 H14.2 V11 C14.2 12.7 13 13.8 11.2 13.8 H9 Z" fill="#8a52b5"/><circle cx="5" cy="3.9" r="2" fill="#8a52b5"/><path d="M1 7.2 H9.2 V12 C9.2 14.4 7.4 15.8 5.1 15.8 C2.8 15.8 1 14.4 1 12 Z" fill="#8a52b5" stroke="#fff" stroke-width="0.7"/></svg>
<div class="cb" style="left:542px;top:210px"></div>
<div class="t b clip" style="left:584px;top:207px;width:92px">Microsoft 365 group</div>
<div class="cell" style="left:678px;top:207px;width:407px;height:20px;background:#d4d4d4"></div>
<div class="gr" style="top:226px"></div>
<div class="cell" style="left:242px;top:227px;width:35px;height:20px;background:#c6d8e9"></div>
<div class="cell" style="left:513px;top:227px;width:69px;height:20px;background:#efefef"></div>
<div class="rl" style="top:246px"></div>
<div class="cell" style="left:277px;top:227px;width:1px;height:19px;background:#ebebeb"></div>
<div class="cell" style="left:297px;top:227px;width:1px;height:19px;background:#ebebeb"></div>
<div class="cell" style="left:317px;top:227px;width:1px;height:19px;background:#ebebeb"></div>
<div class="cell" style="left:582px;top:227px;width:1px;height:19px;background:#ebebeb"></div>
<div class="cell" style="left:678px;top:227px;width:1px;height:19px;background:#ebebeb"></div>
<div class="cell" style="left:844px;top:227px;width:1px;height:19px;background:#ebebeb"></div>
<div class="t num" style="left:240px;top:227px;width:34px">2</div>
<svg class="ic" style="left:279px;top:229px" width="16" height="16" viewBox="0 0 16 16"><circle cx="8" cy="4.4" r="4.2" fill="#2a7cc0"/><path d="M1 13.8 C1 10.8 3.5 9.8 8 9.8 C12.5 9.8 15 10.8 15 13.8 Z" fill="#2a7cc0"/></svg>
<div class="t" style="left:319px;top:227px">Deployment team</div>
<svg class="ic" style="left:496px;top:227px" width="16" height="17" viewBox="0 0 16 17"><circle cx="11.6" cy="3.6" r="1.6" fill="#8a52b5"/><path d="M9 6.2 H14.2 V11 C14.2 12.7 13 13.8 11.2 13.8 H9 Z" fill="#8a52b5"/><circle cx="5" cy="3.9" r="2" fill="#8a52b5"/><path d="M1 7.2 H9.2 V12 C9.2 14.4 7.4 15.8 5.1 15.8 C2.8 15.8 1 14.4 1 12 Z" fill="#8a52b5" stroke="#fff" stroke-width="0.7"/></svg>
<div class="cb" style="left:542px;top:230px"></div>
<div class="t clip" style="left:584px;top:227px;width:92px">Microsoft 365 group</div>
<svg class="ic" style="left:683px;top:228px" width="12" height="16" viewBox="0 0 12 16"><path d="M1 2.5 Q1 1 2.5 1 H9.5 Q11 1 11 2.5 V6 L10 7 H2 L1 6 Z" fill="#e8a53a"/><rect x="5" y="2.8" width="2" height="2" fill="#fff"/><path d="M4 7 H8 V12.5 L6 14.5 L4 12.5 Z" fill="#e8a53a"/></svg>
<div class="t" style="left:698px;top:227px">Owner &amp; Member</div>
<div class="t" style="left:846px;top:227px">MOD Administrator</div>
<div class="cell" style="left:242px;top:247px;width:35px;height:20px;background:#c6d8e9"></div>
<div class="cell" style="left:513px;top:247px;width:69px;height:20px;background:#efefef"></div>
<div class="rl" style="top:266px"></div>
<div class="cell" style="left:277px;top:247px;width:1px;height:19px;background:#ebebeb"></div>
<div class="cell" style="left:297px;top:247px;width:1px;height:19px;background:#ebebeb"></div>
<div class="cell" style="left:317px;top:247px;width:1px;height:19px;background:#ebebeb"></div>
<div class="cell" style="left:582px;top:247px;width:1px;height:19px;background:#ebebeb"></div>
<div class="cell" style="left:678px;top:247px;width:1px;height:19px;background:#ebebeb"></div>
<div class="cell" style="left:844px;top:247px;width:1px;height:19px;background:#ebebeb"></div>
<div class="t num" style="left:240px;top:247px;width:34px">2</div>
<svg class="ic" style="left:279px;top:249px" width="16" height="16" viewBox="0 0 16 16"><circle cx="8" cy="4.4" r="4.2" fill="#2a7cc0"/><path d="M1 13.8 C1 10.8 3.5 9.8 8 9.8 C12.5 9.8 15 10.8 15 13.8 Z" fill="#2a7cc0"/></svg>
<div class="t" style="left:319px;top:247px">Deployment team</div>
<svg class="ic" style="left:496px;top:247px" width="16" height="17" viewBox="0 0 16 17"><circle cx="11.6" cy="3.6" r="1.6" fill="#8a52b5"/><path d="M9 6.2 H14.2 V11 C14.2 12.7 13 13.8 11.2 13.8 H9 Z" fill="#8a52b5"/><circle cx="5" cy="3.9" r="2" fill="#8a52b5"/><path d="M1 7.2 H9.2 V12 C9.2 14.4 7.4 15.8 5.1 15.8 C2.8 15.8 1 14.4 1 12 Z" fill="#8a52b5" stroke="#fff" stroke-width="0.7"/></svg>
<div class="cb" style="left:542px;top:250px"></div>
<div class="t clip" style="left:584px;top:247px;width:92px">Microsoft 365 group</div>
<svg class="ic" style="left:680px;top:249px" width="16" height="16" viewBox="0 0 16 16"><circle cx="8" cy="4.4" r="4.2" fill="#2a7cc0"/><path d="M1 13.8 C1 10.8 3.5 9.8 8 9.8 C12.5 9.8 15 10.8 15 13.8 Z" fill="#2a7cc0"/></svg>
<div class="t" style="left:698px;top:247px">Member</div>
<div class="t" style="left:846px;top:247px">Patti Fernandez</div>
<div class="cell" style="left:242px;top:267px;width:35px;height:20px;background:#c6d8e9"></div>
<div class="cell" style="left:513px;top:267px;width:69px;height:20px;background:#efefef"></div>
<div class="rl" style="top:286px"></div>
<div class="cell" style="left:277px;top:267px;width:1px;height:19px;background:#ebebeb"></div>
<div class="cell" style="left:297px;top:267px;width:1px;height:19px;background:#ebebeb"></div>
<div class="cell" style="left:317px;top:267px;width:1px;height:19px;background:#ebebeb"></div>
<div class="cell" style="left:582px;top:267px;width:1px;height:19px;background:#ebebeb"></div>
<div class="cell" style="left:678px;top:267px;width:1px;height:19px;background:#ebebeb"></div>
<div class="cell" style="left:844px;top:267px;width:1px;height:19px;background:#ebebeb"></div>
<div class="t num" style="left:240px;top:267px;width:34px">2</div>
<svg class="ic" style="left:279px;top:269px" width="16" height="16" viewBox="0 0 16 16"><circle cx="8" cy="4.4" r="4.2" fill="#2a7cc0"/><path d="M1 13.8 C1 10.8 3.5 9.8 8 9.8 C12.5 9.8 15 10.8 15 13.8 Z" fill="#2a7cc0"/></svg>
<div class="t" style="left:319px;top:267px">Deployment team</div>
<svg class="ic" style="left:496px;top:267px" width="16" height="17" viewBox="0 0 16 17"><circle cx="11.6" cy="3.6" r="1.6" fill="#8a52b5"/><path d="M9 6.2 H14.2 V11 C14.2 12.7 13 13.8 11.2 13.8 H9 Z" fill="#8a52b5"/><circle cx="5" cy="3.9" r="2" fill="#8a52b5"/><path d="M1 7.2 H9.2 V12 C9.2 14.4 7.4 15.8 5.1 15.8 C2.8 15.8 1 14.4 1 12 Z" fill="#8a52b5" stroke="#fff" stroke-width="0.7"/></svg>
<div class="cb" style="left:542px;top:270px"></div>
<div class="t clip" style="left:584px;top:267px;width:92px">Microsoft 365 group</div>
<svg class="ic" style="left:680px;top:269px" width="16" height="16" viewBox="0 0 16 16"><circle cx="8" cy="4.4" r="4.2" fill="#2a7cc0"/><path d="M1 13.8 C1 10.8 3.5 9.8 8 9.8 C12.5 9.8 15 10.8 15 13.8 Z" fill="#2a7cc0"/></svg>
<div class="t" style="left:698px;top:267px">Member</div>
<div class="t" style="left:846px;top:267px">Nestor Wilke</div>
<div class="cell" style="left:242px;top:287px;width:35px;height:20px;background:#c6d8e9"></div>
<div class="cell" style="left:513px;top:287px;width:69px;height:20px;background:#efefef"></div>
<div class="rl" style="top:306px"></div>
<div class="cell" style="left:277px;top:287px;width:1px;height:19px;background:#ebebeb"></div>
<div class="cell" style="left:297px;top:287px;width:1px;height:19px;background:#ebebeb"></div>
<div class="cell" style="left:317px;top:287px;width:1px;height:19px;background:#ebebeb"></div>
<div class="cell" style="left:582px;top:287px;width:1px;height:19px;background:#ebebeb"></div>
<div class="cell" style="left:678px;top:287px;width:1px;height:19px;background:#ebebeb"></div>
<div class="cell" style="left:844px;top:287px;width:1px;height:19px;background:#ebebeb"></div>
<div class="t num" style="left:240px;top:287px;width:34px">2</div>
<svg class="ic" style="left:279px;top:289px" width="16" height="16" viewBox="0 0 16 16"><circle cx="8" cy="4.4" r="4.2" fill="#2a7cc0"/><path d="M1 13.8 C1 10.8 3.5 9.8 8 9.8 C12.5 9.8 15 10.8 15 13.8 Z" fill="#2a7cc0"/></svg>
<div class="t" style="left:319px;top:287px">Deployment team</div>
<svg class="ic" style="left:496px;top:287px" width="16" height="17" viewBox="0 0 16 17"><circle cx="11.6" cy="3.6" r="1.6" fill="#8a52b5"/><path d="M9 6.2 H14.2 V11 C14.2 12.7 13 13.8 11.2 13.8 H9 Z" fill="#8a52b5"/><circle cx="5" cy="3.9" r="2" fill="#8a52b5"/><path d="M1 7.2 H9.2 V12 C9.2 14.4 7.4 15.8 5.1 15.8 C2.8 15.8 1 14.4 1 12 Z" fill="#8a52b5" stroke="#fff" stroke-width="0.7"/></svg>
<div class="cb" style="left:542px;top:290px"></div>
<div class="t clip" style="left:584px;top:287px;width:92px">Microsoft 365 group</div>
<svg class="ic" style="left:683px;top:288px" width="12" height="16" viewBox="0 0 12 16"><path d="M1 2.5 Q1 1 2.5 1 H9.5 Q11 1 11 2.5 V6 L10 7 H2 L1 6 Z" fill="#e8a53a"/><rect x="5" y="2.8" width="2" height="2" fill="#fff"/><path d="M4 7 H8 V12.5 L6 14.5 L4 12.5 Z" fill="#e8a53a"/></svg>
<div class="t" style="left:698px;top:287px">Owner &amp; Member</div>
<div class="t" style="left:846px;top:287px">Diego Siciliani</div>
<div class="cell" style="left:242px;top:307px;width:35px;height:20px;background:#c6d8e9"></div>
<div class="cell" style="left:513px;top:307px;width:69px;height:20px;background:#efefef"></div>
<div class="rl" style="top:326px"></div>
<div class="cell" style="left:277px;top:307px;width:1px;height:19px;background:#ebebeb"></div>
<div class="cell" style="left:297px;top:307px;width:1px;height:19px;background:#ebebeb"></div>
<div class="cell" style="left:317px;top:307px;width:1px;height:19px;background:#ebebeb"></div>
<div class="cell" style="left:582px;top:307px;width:1px;height:19px;background:#ebebeb"></div>
<div class="cell" style="left:678px;top:307px;width:1px;height:19px;background:#ebebeb"></div>
<div class="cell" style="left:844px;top:307px;width:1px;height:19px;background:#ebebeb"></div>
<div class="t num" style="left:240px;top:307px;width:34px">2</div>
<svg class="ic" style="left:279px;top:309px" width="16" height="16" viewBox="0 0 16 16"><circle cx="8" cy="4.4" r="4.2" fill="#2a7cc0"/><path d="M1 13.8 C1 10.8 3.5 9.8 8 9.8 C12.5 9.8 15 10.8 15 13.8 Z" fill="#2a7cc0"/></svg>
<div class="t" style="left:319px;top:307px">Deployment team</div>
<svg class="ic" style="left:496px;top:307px" width="16" height="17" viewBox="0 0 16 17"><circle cx="11.6" cy="3.6" r="1.6" fill="#8a52b5"/><path d="M9 6.2 H14.2 V11 C14.2 12.7 13 13.8 11.2 13.8 H9 Z" fill="#8a52b5"/><circle cx="5" cy="3.9" r="2" fill="#8a52b5"/><path d="M1 7.2 H9.2 V12 C9.2 14.4 7.4 15.8 5.1 15.8 C2.8 15.8 1 14.4 1 12 Z" fill="#8a52b5" stroke="#fff" stroke-width="0.7"/></svg>
<div class="cb" style="left:542px;top:310px"></div>
<div class="t clip" style="left:584px;top:307px;width:92px">Microsoft 365 group</div>
<svg class="ic" style="left:680px;top:309px" width="16" height="16" viewBox="0 0 16 16"><circle cx="8" cy="4.4" r="4.2" fill="#2a7cc0"/><path d="M1 13.8 C1 10.8 3.5 9.8 8 9.8 C12.5 9.8 15 10.8 15 13.8 Z" fill="#2a7cc0"/></svg>
<div class="t" style="left:698px;top:307px">Member</div>
<div class="t" style="left:846px;top:307px">Joni Sherman</div>
<div class="cell" style="left:242px;top:327px;width:843px;height:19px;background:#78b4e9"></div>
<div class="cell" style="left:513px;top:327px;width:69px;height:19px;background:#b5d4f1"></div>
<div class="rl" style="top:346px"></div>
<div class="cell" style="left:277px;top:327px;width:1px;height:19px;background:#cfe2f5"></div>
<div class="cell" style="left:297px;top:327px;width:1px;height:19px;background:#cfe2f5"></div>
<div class="cell" style="left:317px;top:327px;width:1px;height:19px;background:#cfe2f5"></div>
<div class="cell" style="left:582px;top:327px;width:1px;height:19px;background:#cfe2f5"></div>
<div class="cell" style="left:678px;top:327px;width:1px;height:19px;background:#cfe2f5"></div>
<div class="cell" style="left:844px;top:327px;width:1px;height:19px;background:#cfe2f5"></div>
<div class="t num w" style="left:240px;top:327px;width:34px">2</div>
<svg class="ic" style="left:279px;top:329px" width="16" height="16" viewBox="0 0 16 16"><path d="M0.8 14.6 C0.8 10.8 3.5 9.4 8 9.4 C12.5 9.4 15.2 10.8 15.2 14.6 Z" fill="#2a7cc0" stroke="#fff" stroke-width="1.1"/><circle cx="8" cy="4.6" r="4.2" fill="#2a7cc0" stroke="#fff" stroke-width="1.1"/></svg>
<div class="t w" style="left:319px;top:327px">Deployment team</div>
<svg class="ic" style="left:496px;top:327px" width="16" height="17" viewBox="0 0 16 17"><circle cx="11.6" cy="3.6" r="1.6" fill="#8a52b5" stroke="#fff" stroke-width="0.6"/><path d="M9 6.2 H14.2 V11 C14.2 12.7 13 13.8 11.2 13.8 H9 Z" fill="#8a52b5" stroke="#fff" stroke-width="0.6"/><circle cx="5" cy="3.9" r="2" fill="#8a52b5" stroke="#fff" stroke-width="0.6"/><path d="M1 7.2 H9.2 V12 C9.2 14.4 7.4 15.8 5.1 15.8 C2.8 15.8 1 14.4 1 12 Z" fill="#8a52b5" stroke="#fff" stroke-width="0.6"/></svg>
<div class="cb" style="left:542px;top:330px"></div>
<div class="t clip w" style="left:584px;top:327px;width:92px">Microsoft 365 group</div>
<svg class="ic" style="left:680px;top:329px" width="16" height="16" viewBox="0 0 16 16"><path d="M0.8 14.6 C0.8 10.8 3.5 9.4 8 9.4 C12.5 9.4 15.2 10.8 15.2 14.6 Z" fill="#2a7cc0" stroke="#fff" stroke-width="1.1"/><circle cx="8" cy="4.6" r="4.2" fill="#2a7cc0" stroke="#fff" stroke-width="1.1"/></svg>
<div class="t w" style="left:698px;top:327px">Member</div>
<div class="t w" style="left:846px;top:327px">Bianca Pisani</div>
<div class="cell" style="left:242px;top:347px;width:35px;height:20px;background:#c6d8e9"></div>
<div class="cell" style="left:513px;top:347px;width:69px;height:20px;background:#efefef"></div>
<div class="rl" style="top:366px"></div>
<div class="cell" style="left:277px;top:347px;width:1px;height:19px;background:#ebebeb"></div>
<div class="cell" style="left:297px;top:347px;width:1px;height:19px;background:#ebebeb"></div>
<div class="cell" style="left:317px;top:347px;width:1px;height:19px;background:#ebebeb"></div>
<div class="cell" style="left:582px;top:347px;width:1px;height:19px;background:#ebebeb"></div>
<div class="cell" style="left:678px;top:347px;width:1px;height:19px;background:#ebebeb"></div>
<div class="cell" style="left:844px;top:347px;width:1px;height:19px;background:#ebebeb"></div>
<div class="t num" style="left:240px;top:347px;width:34px">2</div>
<svg class="ic" style="left:279px;top:349px" width="16" height="16" viewBox="0 0 16 16"><circle cx="8" cy="4.4" r="4.2" fill="#2a7cc0"/><path d="M1 13.8 C1 10.8 3.5 9.8 8 9.8 C12.5 9.8 15 10.8 15 13.8 Z" fill="#2a7cc0"/></svg>
<div class="t" style="left:319px;top:347px">Deployment team</div>
<svg class="ic" style="left:496px;top:347px" width="16" height="17" viewBox="0 0 16 17"><circle cx="11.6" cy="3.6" r="1.6" fill="#8a52b5"/><path d="M9 6.2 H14.2 V11 C14.2 12.7 13 13.8 11.2 13.8 H9 Z" fill="#8a52b5"/><circle cx="5" cy="3.9" r="2" fill="#8a52b5"/><path d="M1 7.2 H9.2 V12 C9.2 14.4 7.4 15.8 5.1 15.8 C2.8 15.8 1 14.4 1 12 Z" fill="#8a52b5" stroke="#fff" stroke-width="0.7"/></svg>
<div class="cb" style="left:542px;top:350px"></div>
<div class="t clip" style="left:584px;top:347px;width:92px">Microsoft 365 group</div>
<svg class="ic" style="left:680px;top:349px" width="16" height="16" viewBox="0 0 16 16"><circle cx="8" cy="4.4" r="4.2" fill="#2a7cc0"/><path d="M1 13.8 C1 10.8 3.5 9.8 8 9.8 C12.5 9.8 15 10.8 15 13.8 Z" fill="#2a7cc0"/></svg>
<div class="t" style="left:698px;top:347px">Member</div>
<div class="t" style="left:846px;top:347px">Dante Homer</div>
<div class="cell" style="left:242px;top:367px;width:35px;height:20px;background:#c6d8e9"></div>
<div class="cell" style="left:513px;top:367px;width:69px;height:20px;background:#efefef"></div>
<div class="rl" style="top:386px"></div>
<div class="cell" style="left:277px;top:367px;width:1px;height:19px;background:#ebebeb"></div>
<div class="cell" style="left:297px;top:367px;width:1px;height:19px;background:#ebebeb"></div>
<div class="cell" style="left:317px;top:367px;width:1px;height:19px;background:#ebebeb"></div>
<div class="cell" style="left:582px;top:367px;width:1px;height:19px;background:#ebebeb"></div>
<div class="cell" style="left:678px;top:367px;width:1px;height:19px;background:#ebebeb"></div>
<div class="cell" style="left:844px;top:367px;width:1px;height:19px;background:#ebebeb"></div>
<div class="t num" style="left:240px;top:367px;width:34px">2</div>
<svg class="ic" style="left:279px;top:369px" width="16" height="16" viewBox="0 0 16 16"><circle cx="8" cy="4.4" r="4.2" fill="#2a7cc0"/><path d="M1 13.8 C1 10.8 3.5 9.8 8 9.8 C12.5 9.8 15 10.8 15 13.8 Z" fill="#2a7cc0"/></svg>
<div class="t" style="left:319px;top:367px">Deployment team</div>
<svg class="ic" style="left:496px;top:367px" width="16" height="17" viewBox="0 0 16 17"><circle cx="11.6" cy="3.6" r="1.6" fill="#8a52b5"/><path d="M9 6.2 H14.2 V11 C14.2 12.7 13 13.8 11.2 13.8 H9 Z" fill="#8a52b5"/><circle cx="5" cy="3.9" r="2" fill="#8a52b5"/><path d="M1 7.2 H9.2 V12 C9.2 14.4 7.4 15.8 5.1 15.8 C2.8 15.8 1 14.4 1 12 Z" fill="#8a52b5" stroke="#fff" stroke-width="0.7"/></svg>
<div class="cb" style="left:542px;top:370px"></div>
<div class="t clip" style="left:584px;top:367px;width:92px">Microsoft 365 group</div>
<svg class="ic" style="left:680px;top:369px" width="16" height="16" viewBox="0 0 16 16"><circle cx="8" cy="4.4" r="4.2" fill="#2a7cc0"/><path d="M1 13.8 C1 10.8 3.5 9.8 8 9.8 C12.5 9.8 15 10.8 15 13.8 Z" fill="#2a7cc0"/></svg>
<div class="t" style="left:698px;top:367px">Member</div>
<div class="t" style="left:846px;top:367px">Bobby Vance</div>
<div class="gr" style="top:386px"></div>
<div class="cell" style="left:222px;top:387px;width:55px;height:20px;background:#8eaac8"></div>
<div class="minus" style="left:227px;top:389px"></div>
<div class="t num b" style="left:240px;top:387px;width:33px">1</div>
<svg class="ic" style="left:279px;top:389px" width="16" height="14" viewBox="0 -1 16 14"><circle cx="11" cy="1.6" r="2.3" fill="#2a7cc0"/><path d="M8 8.6 C8 5.8 9.3 4.4 11 4.4 C13 4.4 15.2 5.6 15.2 7.6 Q15.2 8.6 14.2 8.6 Z" fill="#2a7cc0"/><path d="M0.8 10.2 C0.8 7.2 2.4 5.9 4.8 5.9 C7.4 5.9 9.4 7.2 9.4 10 Q9.4 11.3 8 11.3 H2 Q0.8 11.3 0.8 10.2 Z" fill="#2a7cc0" stroke="#fff" stroke-width="0.9"/><circle cx="4.6" cy="3.3" r="2.8" fill="#2a7cc0" stroke="#fff" stroke-width="0.9"/></svg>
<div class="t b" style="left:319px;top:387px">Design projects2</div>
<div class="cell" style="left:513px;top:387px;width:69px;height:20px;background:#efefef"></div>
<svg class="ic" style="left:496px;top:387px" width="16" height="17" viewBox="0 0 16 17"><circle cx="11.6" cy="3.6" r="1.6" fill="#8a52b5"/><path d="M9 6.2 H14.2 V11 C14.2 12.7 13 13.8 11.2 13.8 H9 Z" fill="#8a52b5"/><circle cx="5" cy="3.9" r="2" fill="#8a52b5"/><path d="M1 7.2 H9.2 V12 C9.2 14.4 7.4 15.8 5.1 15.8 C2.8 15.8 1 14.4 1 12 Z" fill="#8a52b5" stroke="#fff" stroke-width="0.7"/></svg>
<div class="cb" style="left:542px;top:390px"></div>
<div class="t b clip" style="left:584px;top:387px;width:92px">Microsoft 365 group</div>
<div class="cell" style="left:678px;top:387px;width:407px;height:20px;background:#d4d4d4"></div>
<div class="gr" style="top:406px"></div>
<div class="cell" style="left:242px;top:407px;width:35px;height:20px;background:#c6d8e9"></div>
<div class="cell" style="left:513px;top:407px;width:69px;height:20px;background:#efefef"></div>
<div class="rl" style="top:426px"></div>
<div class="cell" style="left:277px;top:407px;width:1px;height:19px;background:#ebebeb"></div>
<div class="cell" style="left:297px;top:407px;width:1px;height:19px;background:#ebebeb"></div>
<div class="cell" style="left:317px;top:407px;width:1px;height:19px;background:#ebebeb"></div>
<div class="cell" style="left:582px;top:407px;width:1px;height:19px;background:#ebebeb"></div>
<div class="cell" style="left:678px;top:407px;width:1px;height:19px;background:#ebebeb"></div>
<div class="cell" style="left:844px;top:407px;width:1px;height:19px;background:#ebebeb"></div>
<div class="t num" style="left:240px;top:407px;width:34px">2</div>
<svg class="ic" style="left:279px;top:409px" width="16" height="16" viewBox="0 0 16 16"><circle cx="8" cy="4.4" r="4.2" fill="#2a7cc0"/><path d="M1 13.8 C1 10.8 3.5 9.8 8 9.8 C12.5 9.8 15 10.8 15 13.8 Z" fill="#2a7cc0"/></svg>
<div class="t" style="left:319px;top:407px">Design projects2</div>
<svg class="ic" style="left:496px;top:407px" width="16" height="17" viewBox="0 0 16 17"><circle cx="11.6" cy="3.6" r="1.6" fill="#8a52b5"/><path d="M9 6.2 H14.2 V11 C14.2 12.7 13 13.8 11.2 13.8 H9 Z" fill="#8a52b5"/><circle cx="5" cy="3.9" r="2" fill="#8a52b5"/><path d="M1 7.2 H9.2 V12 C9.2 14.4 7.4 15.8 5.1 15.8 C2.8 15.8 1 14.4 1 12 Z" fill="#8a52b5" stroke="#fff" stroke-width="0.7"/></svg>
<div class="cb" style="left:542px;top:410px"></div>
<div class="t clip" style="left:584px;top:407px;width:92px">Microsoft 365 group</div>
<svg class="ic" style="left:680px;top:409px" width="16" height="16" viewBox="0 0 16 16"><circle cx="8" cy="4.4" r="4.2" fill="#2a7cc0"/><path d="M1 13.8 C1 10.8 3.5 9.8 8 9.8 C12.5 9.8 15 10.8 15 13.8 Z" fill="#2a7cc0"/></svg>
<div class="t" style="left:698px;top:407px">Member</div>
<div class="t" style="left:846px;top:407px">Irvin Sayers</div>
<div class="cell" style="left:242px;top:427px;width:35px;height:20px;background:#c6d8e9"></div>
<div class="cell" style="left:513px;top:427px;width:69px;height:20px;background:#efefef"></div>
<div class="rl" style="top:446px"></div>
<div class="cell" style="left:277px;top:427px;width:1px;height:19px;background:#ebebeb"></div>
<div class="cell" style="left:297px;top:427px;width:1px;height:19px;background:#ebebeb"></div>
<div class="cell" style="left:317px;top:427px;width:1px;height:19px;background:#ebebeb"></div>
<div class="cell" style="left:582px;top:427px;width:1px;height:19px;background:#ebebeb"></div>
<div class="cell" style="left:678px;top:427px;width:1px;height:19px;background:#ebebeb"></div>
<div class="cell" style="left:844px;top:427px;width:1px;height:19px;background:#ebebeb"></div>
<div class="t num" style="left:240px;top:427px;width:34px">2</div>
<svg class="ic" style="left:279px;top:429px" width="16" height="16" viewBox="0 0 16 16"><circle cx="8" cy="4.4" r="4.2" fill="#2a7cc0"/><path d="M1 13.8 C1 10.8 3.5 9.8 8 9.8 C12.5 9.8 15 10.8 15 13.8 Z" fill="#2a7cc0"/></svg>
<div class="t" style="left:319px;top:427px">Design projects2</div>
<svg class="ic" style="left:496px;top:427px" width="16" height="17" viewBox="0 0 16 17"><circle cx="11.6" cy="3.6" r="1.6" fill="#8a52b5"/><path d="M9 6.2 H14.2 V11 C14.2 12.7 13 13.8 11.2 13.8 H9 Z" fill="#8a52b5"/><circle cx="5" cy="3.9" r="2" fill="#8a52b5"/><path d="M1 7.2 H9.2 V12 C9.2 14.4 7.4 15.8 5.1 15.8 C2.8 15.8 1 14.4 1 12 Z" fill="#8a52b5" stroke="#fff" stroke-width="0.7"/></svg>
<div class="cb" style="left:542px;top:430px"></div>
<div class="t clip" style="left:584px;top:427px;width:92px">Microsoft 365 group</div>
<svg class="ic" style="left:680px;top:429px" width="16" height="16" viewBox="0 0 16 16"><circle cx="8" cy="4.4" r="4.2" fill="#2a7cc0"/><path d="M1 13.8 C1 10.8 3.5 9.8 8 9.8 C12.5 9.8 15 10.8 15 13.8 Z" fill="#2a7cc0"/></svg>
<div class="t" style="left:698px;top:427px">Member</div>
<div class="t" style="left:846px;top:427px">Isaiah Langer</div>
<div class="cell" style="left:242px;top:447px;width:35px;height:20px;background:#c6d8e9"></div>
<div class="cell" style="left:513px;top:447px;width:69px;height:20px;background:#efefef"></div>
<div class="rl" style="top:466px"></div>
<div class="cell" style="left:277px;top:447px;width:1px;height:19px;background:#ebebeb"></div>
<div class="cell" style="left:297px;top:447px;width:1px;height:19px;background:#ebebeb"></div>
<div class="cell" style="left:317px;top:447px;width:1px;height:19px;background:#ebebeb"></div>
<div class="cell" style="left:582px;top:447px;width:1px;height:19px;background:#ebebeb"></div>
<div class="cell" style="left:678px;top:447px;width:1px;height:19px;background:#ebebeb"></div>
<div class="cell" style="left:844px;top:447px;width:1px;height:19px;background:#ebebeb"></div>
<div class="t num" style="left:240px;top:447px;width:34px">2</div>
<svg class="ic" style="left:279px;top:449px" width="16" height="16" viewBox="0 0 16 16"><circle cx="8" cy="4.4" r="4.2" fill="#2a7cc0"/><path d="M1 13.8 C1 10.8 3.5 9.8 8 9.8 C12.5 9.8 15 10.8 15 13.8 Z" fill="#2a7cc0"/></svg>
<div class="t" style="left:319px;top:447px">Design projects2</div>
<svg class="ic" style="left:496px;top:447px" width="16" height="17" viewBox="0 0 16 17"><circle cx="11.6" cy="3.6" r="1.6" fill="#8a52b5"/><path d="M9 6.2 H14.2 V11 C14.2 12.7 13 13.8 11.2 13.8 H9 Z" fill="#8a52b5"/><circle cx="5" cy="3.9" r="2" fill="#8a52b5"/><path d="M1 7.2 H9.2 V12 C9.2 14.4 7.4 15.8 5.1 15.8 C2.8 15.8 1 14.4 1 12 Z" fill="#8a52b5" stroke="#fff" stroke-width="0.7"/></svg>
<div class="cb" style="left:542px;top:450px"></div>
<div class="t clip" style="left:584px;top:447px;width:92px">Microsoft 365 group</div>
<svg class="ic" style="left:680px;top:449px" width="16" height="16" viewBox="0 0 16 16"><circle cx="8" cy="4.4" r="4.2" fill="#2a7cc0"/><path d="M1 13.8 C1 10.8 3.5 9.8 8 9.8 C12.5 9.8 15 10.8 15 13.8 Z" fill="#2a7cc0"/></svg>
<div class="t" style="left:698px;top:447px">Member</div>
<div class="t" style="left:846px;top:447px">Bianca Pisani</div>
<div class="cell" style="left:242px;top:467px;width:35px;height:20px;background:#c6d8e9"></div>
<div class="cell" style="left:513px;top:467px;width:69px;height:20px;background:#efefef"></div>
<div class="rl" style="top:486px"></div>
<div class="cell" style="left:277px;top:467px;width:1px;height:19px;background:#ebebeb"></div>
<div class="cell" style="left:297px;top:467px;width:1px;height:19px;background:#ebebeb"></div>
<div class="cell" style="left:317px;top:467px;width:1px;height:19px;background:#ebebeb"></div>
<div class="cell" style="left:582px;top:467px;width:1px;height:19px;background:#ebebeb"></div>
<div class="cell" style="left:678px;top:467px;width:1px;height:19px;background:#ebebeb"></div>
<div class="cell" style="left:844px;top:467px;width:1px;height:19px;background:#ebebeb"></div>
<div class="t num" style="left:240px;top:467px;width:34px">2</div>
<svg class="ic" style="left:279px;top:469px" width="16" height="16" viewBox="0 0 16 16"><circle cx="8" cy="4.4" r="4.2" fill="#2a7cc0"/><path d="M1 13.8 C1 10.8 3.5 9.8 8 9.8 C12.5 9.8 15 10.8 15 13.8 Z" fill="#2a7cc0"/></svg>
<div class="t" style="left:319px;top:467px">Design projects2</div>
<svg class="ic" style="left:496px;top:467px" width="16" height="17" viewBox="0 0 16 17"><circle cx="11.6" cy="3.6" r="1.6" fill="#8a52b5"/><path d="M9 6.2 H14.2 V11 C14.2 12.7 13 13.8 11.2 13.8 H9 Z" fill="#8a52b5"/><circle cx="5" cy="3.9" r="2" fill="#8a52b5"/><path d="M1 7.2 H9.2 V12 C9.2 14.4 7.4 15.8 5.1 15.8 C2.8 15.8 1 14.4 1 12 Z" fill="#8a52b5" stroke="#fff" stroke-width="0.7"/></svg>
<div class="cb" style="left:542px;top:470px"></div>
<div class="t clip" style="left:584px;top:467px;width:92px">Microsoft 365 group</div>
<svg class="ic" style="left:680px;top:468px" width="16" height="16" viewBox="0 0 16 16"><rect x="1" y="1" width="6" height="6" fill="#2b7cc7"/><path d="M2.3 2.3 L5.4 5.4 M5.6 3 V5.6 H3" stroke="#fff" stroke-width="1" fill="none"/><path d="M7.2 1 H12 Q14.2 1 14.2 3.5 V6 Q14.2 8.5 12 8.5 H11 V14.8 L9.5 16 L8 14.8 V8.5 H7.2 V5.8 H9 V3.6 H7.2 Z" fill="#e8a53a"/></svg>
<div class="t" style="left:698px;top:467px">Owner ONLY</div>
<div class="t" style="left:846px;top:467px">MOD Administrator</div>
<div class="cell" style="left:242px;top:487px;width:35px;height:20px;background:#c6d8e9"></div>
<div class="cell" style="left:513px;top:487px;width:69px;height:20px;background:#efefef"></div>
<div class="rl" style="top:506px"></div>
<div class="cell" style="left:277px;top:487px;width:1px;height:19px;background:#ebebeb"></div>
<div class="cell" style="left:297px;top:487px;width:1px;height:19px;background:#ebebeb"></div>
<div class="cell" style="left:317px;top:487px;width:1px;height:19px;background:#ebebeb"></div>
<div class="cell" style="left:582px;top:487px;width:1px;height:19px;background:#ebebeb"></div>
<div class="cell" style="left:678px;top:487px;width:1px;height:19px;background:#ebebeb"></div>
<div class="cell" style="left:844px;top:487px;width:1px;height:19px;background:#ebebeb"></div>
<div class="t num" style="left:240px;top:487px;width:34px">2</div>
<svg class="ic" style="left:279px;top:489px" width="16" height="16" viewBox="0 0 16 16"><circle cx="8" cy="4.4" r="4.2" fill="#2a7cc0"/><path d="M1 13.8 C1 10.8 3.5 9.8 8 9.8 C12.5 9.8 15 10.8 15 13.8 Z" fill="#2a7cc0"/></svg>
<div class="t" style="left:319px;top:487px">Design projects2</div>
<svg class="ic" style="left:496px;top:487px" width="16" height="17" viewBox="0 0 16 17"><circle cx="11.6" cy="3.6" r="1.6" fill="#8a52b5"/><path d="M9 6.2 H14.2 V11 C14.2 12.7 13 13.8 11.2 13.8 H9 Z" fill="#8a52b5"/><circle cx="5" cy="3.9" r="2" fill="#8a52b5"/><path d="M1 7.2 H9.2 V12 C9.2 14.4 7.4 15.8 5.1 15.8 C2.8 15.8 1 14.4 1 12 Z" fill="#8a52b5" stroke="#fff" stroke-width="0.7"/></svg>
<div class="cb" style="left:542px;top:490px"></div>
<div class="t clip" style="left:584px;top:487px;width:92px">Microsoft 365 group</div>
<svg class="ic" style="left:680px;top:488px" width="16" height="16" viewBox="0 0 16 16"><rect x="1" y="1" width="6" height="6" fill="#2b7cc7"/><path d="M2.3 2.3 L5.4 5.4 M5.6 3 V5.6 H3" stroke="#fff" stroke-width="1" fill="none"/><path d="M7.2 1 H12 Q14.2 1 14.2 3.5 V6 Q14.2 8.5 12 8.5 H11 V14.8 L9.5 16 L8 14.8 V8.5 H7.2 V5.8 H9 V3.6 H7.2 Z" fill="#e8a53a"/></svg>
<div class="t" style="left:698px;top:487px">Owner ONLY</div>
<div class="t" style="left:846px;top:487px">Brian Johnson (TAILSPIN)</div>
<div class="cell" style="left:242px;top:507px;width:35px;height:20px;background:#c6d8e9"></div>
<div class="cell" style="left:513px;top:507px;width:69px;height:20px;background:#efefef"></div>
<div class="rl" style="top:526px"></div>
<div class="cell" style="left:277px;top:507px;width:1px;height:19px;background:#ebebeb"></div>
<div class="cell" style="left:297px;top:507px;width:1px;height:19px;background:#ebebeb"></div>
<div class="cell" style="left:317px;top:507px;width:1px;height:19px;background:#ebebeb"></div>
<div class="cell" style="left:582px;top:507px;width:1px;height:19px;background:#ebebeb"></div>
<div class="cell" style="left:678px;top:507px;width:1px;height:19px;background:#ebebeb"></div>
<div class="cell" style="left:844px;top:507px;width:1px;height:19px;background:#ebebeb"></div>
<div class="t num" style="left:240px;top:507px;width:34px">2</div>
<svg class="ic" style="left:279px;top:509px" width="16" height="16" viewBox="0 0 16 16"><circle cx="8" cy="4.4" r="4.2" fill="#2a7cc0"/><path d="M1 13.8 C1 10.8 3.5 9.8 8 9.8 C12.5 9.8 15 10.8 15 13.8 Z" fill="#2a7cc0"/></svg>
<div class="t" style="left:319px;top:507px">Design projects2</div>
<svg class="ic" style="left:496px;top:507px" width="16" height="17" viewBox="0 0 16 17"><circle cx="11.6" cy="3.6" r="1.6" fill="#8a52b5"/><path d="M9 6.2 H14.2 V11 C14.2 12.7 13 13.8 11.2 13.8 H9 Z" fill="#8a52b5"/><circle cx="5" cy="3.9" r="2" fill="#8a52b5"/><path d="M1 7.2 H9.2 V12 C9.2 14.4 7.4 15.8 5.1 15.8 C2.8 15.8 1 14.4 1 12 Z" fill="#8a52b5" stroke="#fff" stroke-width="0.7"/></svg>
<div class="cb" style="left:542px;top:510px"></div>
<div class="t clip" style="left:584px;top:507px;width:92px">Microsoft 365 group</div>
<svg class="ic" style="left:680px;top:508px" width="16" height="16" viewBox="0 0 16 16"><rect x="1" y="1" width="6" height="6" fill="#2b7cc7"/><path d="M2.3 2.3 L5.4 5.4 M5.6 3 V5.6 H3" stroke="#fff" stroke-width="1" fill="none"/><path d="M7.2 1 H12 Q14.2 1 14.2 3.5 V6 Q14.2 8.5 12 8.5 H11 V14.8 L9.5 16 L8 14.8 V8.5 H7.2 V5.8 H9 V3.6 H7.2 Z" fill="#e8a53a"/></svg>
<div class="t" style="left:698px;top:507px">Owner ONLY</div>
<div class="t" style="left:846px;top:507px">Conf Room Adams</div>
<div class="cell" style="left:242px;top:527px;width:35px;height:20px;background:#c6d8e9"></div>
<div class="cell" style="left:513px;top:527px;width:69px;height:20px;background:#efefef"></div>
<div class="rl" style="top:546px"></div>
<div class="cell" style="left:277px;top:527px;width:1px;height:19px;background:#ebebeb"></div>
<div class="cell" style="left:297px;top:527px;width:1px;height:19px;background:#ebebeb"></div>
<div class="cell" style="left:317px;top:527px;width:1px;height:19px;background:#ebebeb"></div>
<div class="cell" style="left:582px;top:527px;width:1px;height:19px;background:#ebebeb"></div>
<div class="cell" style="left:678px;top:527px;width:1px;height:19px;background:#ebebeb"></div>
<div class="cell" style="left:844px;top:527px;width:1px;height:19px;background:#ebebeb"></div>
<div class="t num" style="left:240px;top:527px;width:34px">2</div>
<svg class="ic" style="left:279px;top:529px" width="16" height="16" viewBox="0 0 16 16"><circle cx="8" cy="4.4" r="4.2" fill="#2a7cc0"/><path d="M1 13.8 C1 10.8 3.5 9.8 8 9.8 C12.5 9.8 15 10.8 15 13.8 Z" fill="#2a7cc0"/></svg>
<div class="t" style="left:319px;top:527px">Design projects2</div>
<svg class="ic" style="left:496px;top:527px" width="16" height="17" viewBox="0 0 16 17"><circle cx="11.6" cy="3.6" r="1.6" fill="#8a52b5"/><path d="M9 6.2 H14.2 V11 C14.2 12.7 13 13.8 11.2 13.8 H9 Z" fill="#8a52b5"/><circle cx="5" cy="3.9" r="2" fill="#8a52b5"/><path d="M1 7.2 H9.2 V12 C9.2 14.4 7.4 15.8 5.1 15.8 C2.8 15.8 1 14.4 1 12 Z" fill="#8a52b5" stroke="#fff" stroke-width="0.7"/></svg>
<div class="cb" style="left:542px;top:530px"></div>
<div class="t clip" style="left:584px;top:527px;width:92px">Microsoft 365 group</div>
<svg class="ic" style="left:680px;top:528px" width="16" height="16" viewBox="0 0 16 16"><rect x="1" y="1" width="6" height="6" fill="#2b7cc7"/><path d="M2.3 2.3 L5.4 5.4 M5.6 3 V5.6 H3" stroke="#fff" stroke-width="1" fill="none"/><path d="M7.2 1 H12 Q14.2 1 14.2 3.5 V6 Q14.2 8.5 12 8.5 H11 V14.8 L9.5 16 L8 14.8 V8.5 H7.2 V5.8 H9 V3.6 H7.2 Z" fill="#e8a53a"/></svg>
<div class="t" style="left:698px;top:527px">Owner ONLY</div>
<div class="t" style="left:846px;top:527px">Conf Room Winter</div>
<div class="gr" style="top:546px"></div>
<div class="cell" style="left:222px;top:547px;width:55px;height:20px;background:#8eaac8"></div>
<div class="minus" style="left:227px;top:549px"></div>
<div class="t num b" style="left:240px;top:547px;width:33px">1</div>
<svg class="ic" style="left:279px;top:549px" width="16" height="14" viewBox="0 -1 16 14"><circle cx="11" cy="1.6" r="2.3" fill="#2a7cc0"/><path d="M8 8.6 C8 5.8 9.3 4.4 11 4.4 C13 4.4 15.2 5.6 15.2 7.6 Q15.2 8.6 14.2 8.6 Z" fill="#2a7cc0"/><path d="M0.8 10.2 C0.8 7.2 2.4 5.9 4.8 5.9 C7.4 5.9 9.4 7.2 9.4 10 Q9.4 11.3 8 11.3 H2 Q0.8 11.3 0.8 10.2 Z" fill="#2a7cc0" stroke="#fff" stroke-width="0.9"/><circle cx="4.6" cy="3.3" r="2.8" fill="#2a7cc0" stroke="#fff" stroke-width="0.9"/></svg>
<div class="t b" style="left:319px;top:547px">Digital marketing strategy</div>
<div class="cell" style="left:513px;top:547px;width:69px;height:20px;background:#efefef"></div>
<svg class="ic" style="left:496px;top:547px" width="16" height="17" viewBox="0 0 16 17"><circle cx="11.6" cy="3.6" r="1.6" fill="#8a52b5"/><path d="M9 6.2 H14.2 V11 C14.2 12.7 13 13.8 11.2 13.8 H9 Z" fill="#8a52b5"/><circle cx="5" cy="3.9" r="2" fill="#8a52b5"/><path d="M1 7.2 H9.2 V12 C9.2 14.4 7.4 15.8 5.1 15.8 C2.8 15.8 1 14.4 1 12 Z" fill="#8a52b5" stroke="#fff" stroke-width="0.7"/></svg>
<div class="cb" style="left:542px;top:550px"></div>
<div class="t b clip" style="left:584px;top:547px;width:92px">Microsoft 365 group</div>
<div class="cell" style="left:678px;top:547px;width:407px;height:20px;background:#d4d4d4"></div>
<div class="gr" style="top:566px"></div>
<div class="cell" style="left:242px;top:567px;width:35px;height:20px;background:#c6d8e9"></div>
<div class="cell" style="left:513px;top:567px;width:69px;height:20px;background:#efefef"></div>
<div class="rl" style="top:586px"></div>
<div class="cell" style="left:277px;top:567px;width:1px;height:19px;background:#ebebeb"></div>
<div class="cell" style="left:297px;top:567px;width:1px;height:19px;background:#ebebeb"></div>
<div class="cell" style="left:317px;top:567px;width:1px;height:19px;background:#ebebeb"></div>
<div class="cell" style="left:582px;top:567px;width:1px;height:19px;background:#ebebeb"></div>
<div class="cell" style="left:678px;top:567px;width:1px;height:19px;background:#ebebeb"></div>
<div class="cell" style="left:844px;top:567px;width:1px;height:19px;background:#ebebeb"></div>
<div class="t num" style="left:240px;top:567px;width:34px">2</div>
<svg class="ic" style="left:279px;top:569px" width="16" height="16" viewBox="0 0 16 16"><circle cx="8" cy="4.4" r="4.2" fill="#2a7cc0"/><path d="M1 13.8 C1 10.8 3.5 9.8 8 9.8 C12.5 9.8 15 10.8 15 13.8 Z" fill="#2a7cc0"/></svg>
<div class="t" style="left:319px;top:567px">Digital marketing strategy</div>
<svg class="ic" style="left:496px;top:567px" width="16" height="17" viewBox="0 0 16 17"><circle cx="11.6" cy="3.6" r="1.6" fill="#8a52b5"/><path d="M9 6.2 H14.2 V11 C14.2 12.7 13 13.8 11.2 13.8 H9 Z" fill="#8a52b5"/><circle cx="5" cy="3.9" r="2" fill="#8a52b5"/><path d="M1 7.2 H9.2 V12 C9.2 14.4 7.4 15.8 5.1 15.8 C2.8 15.8 1 14.4 1 12 Z" fill="#8a52b5" stroke="#fff" stroke-width="0.7"/></svg>
<div class="cb" style="left:542px;top:570px"></div>
<div class="t clip" style="left:584px;top:567px;width:92px">Microsoft 365 group</div>
<svg class="ic" style="left:680px;top:569px" width="16" height="16" viewBox="0 0 16 16"><circle cx="8" cy="4.4" r="4.2" fill="#2a7cc0"/><path d="M1 13.8 C1 10.8 3.5 9.8 8 9.8 C12.5 9.8 15 10.8 15 13.8 Z" fill="#2a7cc0"/></svg>
<div class="t" style="left:698px;top:567px">Member</div>
<div class="t" style="left:846px;top:567px">Irvin Sayers</div>
<div class="cell" style="left:242px;top:587px;width:35px;height:20px;background:#c6d8e9"></div>
<div class="cell" style="left:513px;top:587px;width:69px;height:20px;background:#efefef"></div>
<div class="rl" style="top:606px"></div>
<div class="cell" style="left:277px;top:587px;width:1px;height:19px;background:#ebebeb"></div>
<div class="cell" style="left:297px;top:587px;width:1px;height:19px;background:#ebebeb"></div>
<div class="cell" style="left:317px;top:587px;width:1px;height:19px;background:#ebebeb"></div>
<div class="cell" style="left:582px;top:587px;width:1px;height:19px;background:#ebebeb"></div>
<div class="cell" style="left:678px;top:587px;width:1px;height:19px;background:#ebebeb"></div>
<div class="cell" style="left:844px;top:587px;width:1px;height:19px;background:#ebebeb"></div>
<div class="t num" style="left:240px;top:587px;width:34px">2</div>
<svg class="ic" style="left:279px;top:589px" width="16" height="16" viewBox="0 0 16 16"><circle cx="8" cy="4.4" r="4.2" fill="#2a7cc0"/><path d="M1 13.8 C1 10.8 3.5 9.8 8 9.8 C12.5 9.8 15 10.8 15 13.8 Z" fill="#2a7cc0"/></svg>
<div class="t" style="left:319px;top:587px">Digital marketing strategy</div>
<svg class="ic" style="left:496px;top:587px" width="16" height="17" viewBox="0 0 16 17"><circle cx="11.6" cy="3.6" r="1.6" fill="#8a52b5"/><path d="M9 6.2 H14.2 V11 C14.2 12.7 13 13.8 11.2 13.8 H9 Z" fill="#8a52b5"/><circle cx="5" cy="3.9" r="2" fill="#8a52b5"/><path d="M1 7.2 H9.2 V12 C9.2 14.4 7.4 15.8 5.1 15.8 C2.8 15.8 1 14.4 1 12 Z" fill="#8a52b5" stroke="#fff" stroke-width="0.7"/></svg>
<div class="cb" style="left:542px;top:590px"></div>
<div class="t clip" style="left:584px;top:587px;width:92px">Microsoft 365 group</div>
<svg class="ic" style="left:680px;top:589px" width="16" height="16" viewBox="0 0 16 16"><circle cx="8" cy="4.4" r="4.2" fill="#2a7cc0"/><path d="M1 13.8 C1 10.8 3.5 9.8 8 9.8 C12.5 9.8 15 10.8 15 13.8 Z" fill="#2a7cc0"/></svg>
<div class="t" style="left:698px;top:587px">Member</div>
<div class="t" style="left:846px;top:587px">Isaiah Langer</div>
<div class="cell" style="left:242px;top:607px;width:35px;height:20px;background:#c6d8e9"></div>
<div class="cell" style="left:513px;top:607px;width:69px;height:20px;background:#efefef"></div>
<div class="rl" style="top:626px"></div>
<div class="cell" style="left:277px;top:607px;width:1px;height:19px;background:#ebebeb"></div>
<div class="cell" style="left:297px;top:607px;width:1px;height:19px;background:#ebebeb"></div>
<div class="cell" style="left:317px;top:607px;width:1px;height:19px;background:#ebebeb"></div>
<div class="cell" style="left:582px;top:607px;width:1px;height:19px;background:#ebebeb"></div>
<div class="cell" style="left:678px;top:607px;width:1px;height:19px;background:#ebebeb"></div>
<div class="cell" style="left:844px;top:607px;width:1px;height:19px;background:#ebebeb"></div>
<div class="t num" style="left:240px;top:607px;width:34px">2</div>
<svg class="ic" style="left:279px;top:609px" width="16" height="16" viewBox="0 0 16 16"><circle cx="8" cy="4.4" r="4.2" fill="#2a7cc0"/><path d="M1 13.8 C1 10.8 3.5 9.8 8 9.8 C12.5 9.8 15 10.8 15 13.8 Z" fill="#2a7cc0"/></svg>
<div class="t" style="left:319px;top:607px">Digital marketing strategy</div>
<svg class="ic" style="left:496px;top:607px" width="16" height="17" viewBox="0 0 16 17"><circle cx="11.6" cy="3.6" r="1.6" fill="#8a52b5"/><path d="M9 6.2 H14.2 V11 C14.2 12.7 13 13.8 11.2 13.8 H9 Z" fill="#8a52b5"/><circle cx="5" cy="3.9" r="2" fill="#8a52b5"/><path d="M1 7.2 H9.2 V12 C9.2 14.4 7.4 15.8 5.1 15.8 C2.8 15.8 1 14.4 1 12 Z" fill="#8a52b5" stroke="#fff" stroke-width="0.7"/></svg>
<div class="cb" style="left:542px;top:610px"></div>
<div class="t clip" style="left:584px;top:607px;width:92px">Microsoft 365 group</div>
<svg class="ic" style="left:680px;top:608px" width="16" height="16" viewBox="0 0 16 16"><rect x="1" y="1" width="6" height="6" fill="#2b7cc7"/><path d="M2.3 2.3 L5.4 5.4 M5.6 3 V5.6 H3" stroke="#fff" stroke-width="1" fill="none"/><path d="M7.2 1 H12 Q14.2 1 14.2 3.5 V6 Q14.2 8.5 12 8.5 H11 V14.8 L9.5 16 L8 14.8 V8.5 H7.2 V5.8 H9 V3.6 H7.2 Z" fill="#e8a53a"/></svg>
<div class="t" style="left:698px;top:607px">Owner ONLY</div>
<div class="t" style="left:846px;top:607px">MOD Administrator</div>
<div class="a" style="left:492px;top:184px;width:1px;height:442px;background:#2d3b4c"></div>
</body></html>
